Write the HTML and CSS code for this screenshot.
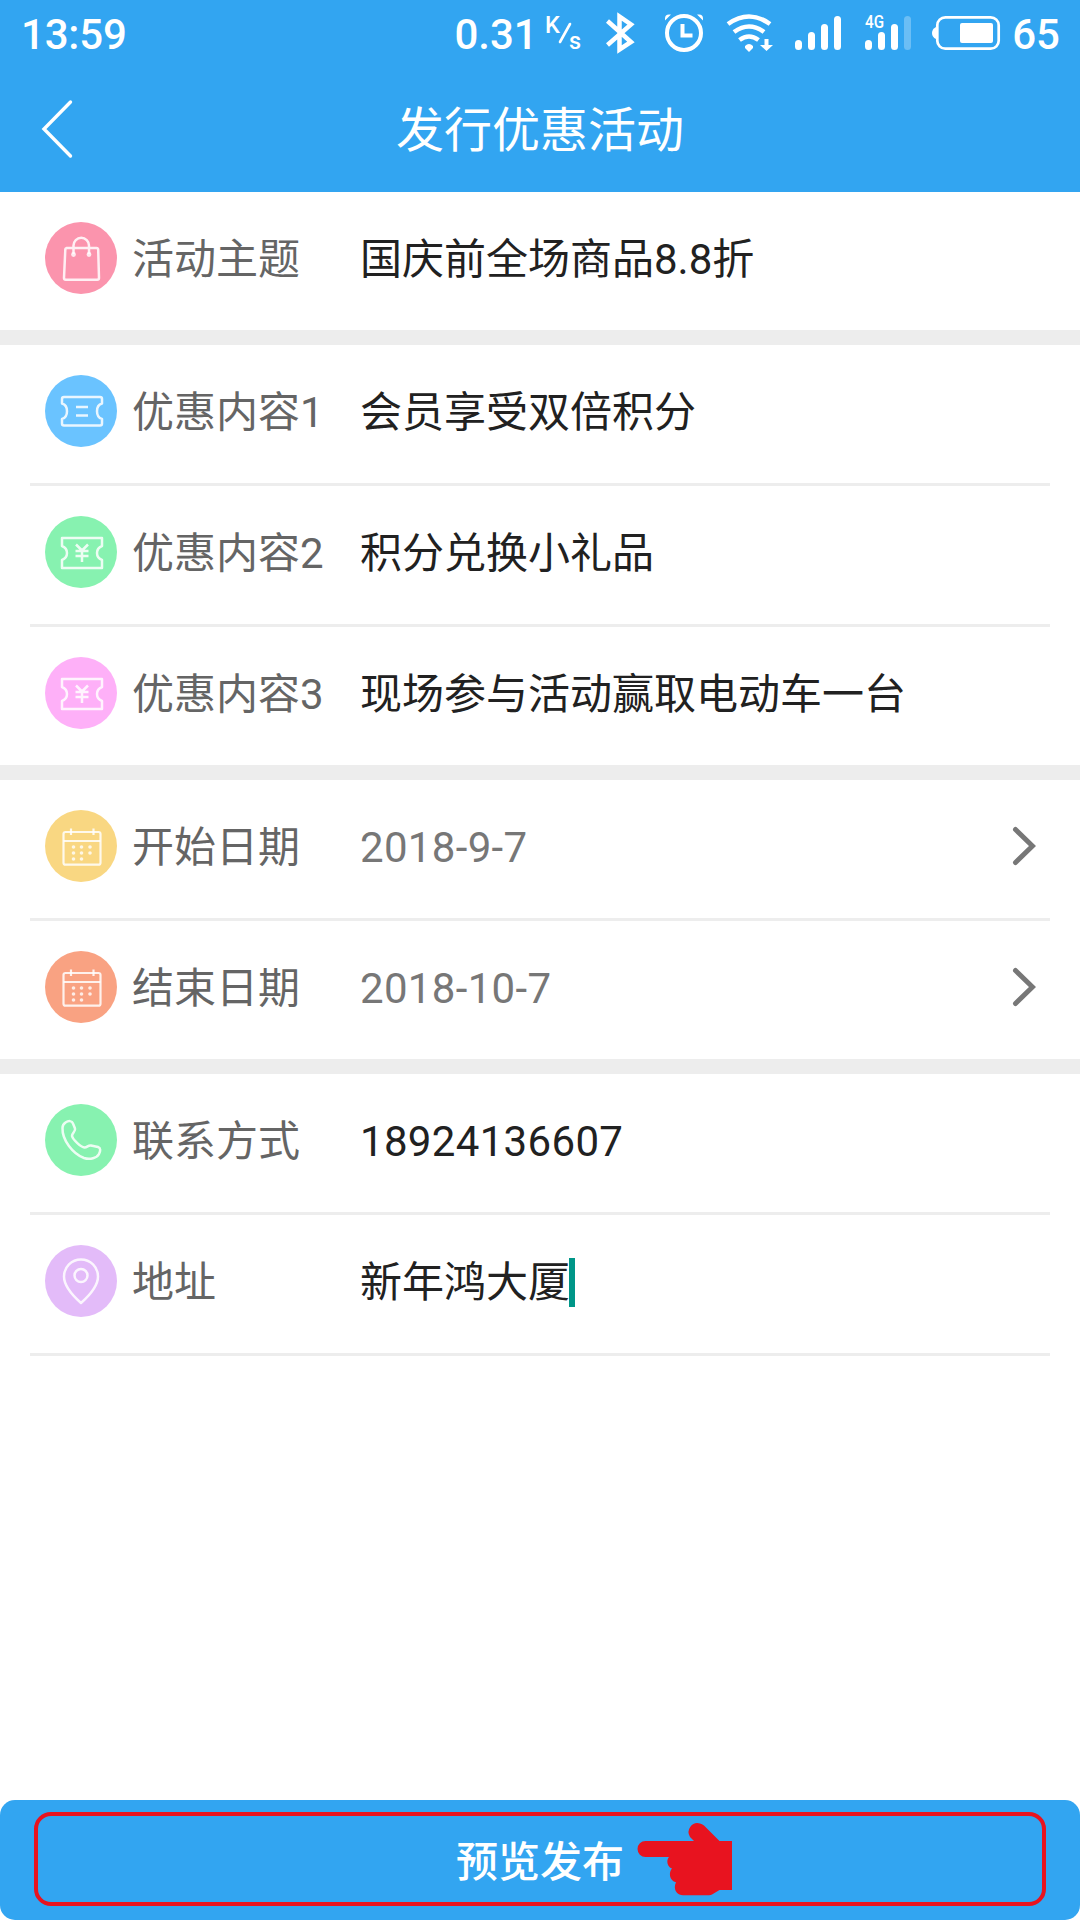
FILE: index.html
```html
<!DOCTYPE html>
<html lang="zh-CN">
<head>
<meta charset="utf-8">
<title>发行优惠活动</title>
<link rel="stylesheet" href="styles.css">
</head>
<body>
<div class="screen">
  <header class="header">
    <div class="status">
      <span class="time">13:59</span>
      <span class="rate">0.31</span>
      <svg class="status-icons" width="464" height="66" viewBox="540 0 464 66" fill="none" stroke="#fff">
        <text class="unit" x="545" y="32.500">K</text>
        <text class="unit" x="569" y="48.500">s</text>
        <path d="M570 24 560 42" stroke-width="2.6" stroke-linecap="round"/>
        <path d="M607.500 21 631 42 619.500 49.500V16.500L631 24.500 607.500 45" stroke-width="4.500"/>
        <circle cx="684" cy="33" r="17" stroke-width="4"/>
        <path d="M682.500 24v11.500h10" stroke-width="4"/>
        <path d="M665 20.500v-2q0-4 4-4h2zM703 20.500v-2q0-4-4-4h-2z" fill="#fff" stroke="none"/>
        <g stroke-width="4.600">
          <path d="M728 24q21-15 42 0M734 32q15-11 30 0M739.500 40q9.500-7 19 0"/>
        </g>
        <path d="M745 46q4-4 8 0v2l-4 4-4-4zM764.500 39h4v6h4.500l-6.500 6-6.500-6h4.500z" fill="#fff" stroke="none"/>
        <g stroke-width="7" stroke-linecap="round">
          <path d="M798.500 43.500v3M811.500 35.500v11M824.500 27.500v19M837.500 19.500v27M868.500 43.500v3M881.500 35.500v11M894.500 27.500v19"/>
          <path d="M907.500 19.500v27" opacity=".28"/>
        </g>
        <text class="network" x="865" y="28" textLength="19" lengthAdjust="spacingAndGlyphs">4G</text>
        <rect x="937.300" y="17.300" width="61.400" height="31.400" rx="8" stroke-width="2.700"/>
        <rect x="960" y="23" width="33" height="20" rx="2" fill="#fff" stroke="none"/>
        <path d="M936 27q-4 2-4 6t4 6z" fill="#fff" stroke="none"/>
      </svg>
      <span class="battery">65</span>
    </div>
    <div class="titlebar">
      <svg class="back" width="33" height="60" viewBox="0 0 33 60" fill="none" stroke="#fff" stroke-width="3.400" stroke-linecap="round"><path d="M29.500 3 3 30l26.500 27"/></svg>
      <h1 class="title">发行优惠活动</h1>
    </div>
  </header>

  <main class="form">
    <section class="group">
      <div class="row">
        <svg class="icon pink" viewBox="0 0 72 72"><path d="M21.500 26h30q1.500 0 1.700 1.700L54 56q0 1.700-1.700 1.700H20.700q-1.700 0-1.700-1.700l1.300-28.300q.2-1.700 1.700-1.700zM28.500 32v-8.500a7.700 7.700 0 0 1 15.500 0V32"/><g class="dots"><circle cx="28.500" cy="32.500" r="2.400"/><circle cx="44" cy="32.500" r="2.400"/></g></svg>
        <span class="label">活动主题</span><span class="value">国庆前全场商品8.8折</span>
      </div>
    </section>
    <section class="group">
      <div class="row">
        <svg class="icon blue" viewBox="0 0 72 72"><path d="M19 22h36q2 0 2 2v4.500q-5 1.500-5 7.700t5 7.700v4.500q0 2-2 2H19q-2 0-2-2v-4.500q5-1.500 5-7.700t-5-7.700V24q0-2 2-2zM31 32h12M31 40.500h12"/></svg>
        <span class="label">优惠内容1</span><span class="value">会员享受双倍积分</span>
      </div>
      <div class="row">
        <svg class="icon green" viewBox="0 0 72 72"><path d="M17 22h40v8q-5 2-5 7t5 7v8H17v-8q5-2 5-7t-5-7zM31 28.500l6 6 6-6M30.500 35h13M30.500 40h13M37 34.500V46"/></svg>
        <span class="label">优惠内容2</span><span class="value">积分兑换小礼品</span>
      </div>
      <div class="row">
        <svg class="icon magenta" viewBox="0 0 72 72"><path d="M17 22h40v8q-5 2-5 7t5 7v8H17v-8q5-2 5-7t-5-7zM31 28.500l6 6 6-6M30.500 35h13M30.500 40h13M37 34.500V46"/></svg>
        <span class="label">优惠内容3</span><span class="value">现场参与活动赢取电动车一台</span>
      </div>
    </section>
    <section class="group">
      <div class="row">
        <svg class="icon yellow thin" viewBox="0 0 72 72"><rect x="18.500" y="22" width="37" height="32.700" rx="2"/><path d="M18.500 31h37M26 18.500V25M48.500 18.500V25"/><g class="dots"><circle cx="28.500" cy="37" r="1.800"/><circle cx="36.500" cy="37" r="1.800"/><circle cx="45" cy="37" r="1.800"/><circle cx="28.500" cy="43" r="1.800"/><circle cx="36.500" cy="43" r="1.800"/><circle cx="45" cy="43" r="1.800"/><circle cx="28.500" cy="49" r="1.800"/><circle cx="36.500" cy="49" r="1.800"/></g></svg>
        <span class="label">开始日期</span><span class="value date">2018-9-7</span>
        <svg class="chevron" viewBox="0 0 24 42"><path d="M3.500 4.500 20.500 21l-17 16.500"/></svg>
      </div>
      <div class="row">
        <svg class="icon orange thin" viewBox="0 0 72 72"><rect x="18.500" y="22" width="37" height="32.700" rx="2"/><path d="M18.500 31h37M26 18.500V25M48.500 18.500V25"/><g class="dots"><circle cx="28.500" cy="37" r="1.800"/><circle cx="36.500" cy="37" r="1.800"/><circle cx="45" cy="37" r="1.800"/><circle cx="28.500" cy="43" r="1.800"/><circle cx="36.500" cy="43" r="1.800"/><circle cx="45" cy="43" r="1.800"/><circle cx="28.500" cy="49" r="1.800"/><circle cx="36.500" cy="49" r="1.800"/></g></svg>
        <span class="label">结束日期</span><span class="value date">2018-10-7</span>
        <svg class="chevron" viewBox="0 0 24 42"><path d="M3.500 4.500 20.500 21l-17 16.500"/></svg>
      </div>
    </section>
    <section class="group last">
      <div class="row">
        <svg class="icon green" viewBox="0 0 72 72"><path d="M20.500 18.500c3-2 6.500-2 7.500 1l2 5c1 3-3 4-3 7.500 1 4 9 11 12.500 11.500 3 0 3.500-2.500 6.500-2l7 1.500c3 1 2.500 4 1 7-2 4-9 6-15 4C28 50 17 36 17.500 24q0-3.500 3-5.500z"/></svg>
        <span class="label">联系方式</span><span class="value number">18924136607</span>
      </div>
      <div class="row">
        <svg class="icon purple" viewBox="0 0 72 72"><path d="M36 58C27 50 19 40 19 31.500a17 17 0 0 1 34 0C53 40 45 50 36 58z"/><circle cx="36" cy="30.500" r="6.500"/></svg>
        <span class="label">地址</span><span class="value">新年鸿大厦</span><i class="caret"></i>
      </div>
    </section>
  </main>

  <footer class="footer">
    <div class="submit">
      <div class="highlight"><span class="submit-text">预览发布</span>
        <svg class="hand" width="95" height="73" viewBox="0 0 95 73" fill="#e8131f"><path d="M8.500 18H57l-4-4A9 9 0 0 1 63 .5q2 .5 4 2L82.500 18H95v49H82.500L75 71.500q-1 .7-3 .7H46c-7 0-10-7-7-13-6-1-8-9-4-13.700-5-2-6-8-3-11.500H8.500a8 8 0 0 1 0-16z"/></svg>
      </div>
    </div>
  </footer>
</div>
</body>
</html>
```
FILE: styles.css
```css
* { box-sizing: border-box; }
body {
  margin: 0;
  font-family: Roboto, "Noto Sans CJK SC", sans-serif;
  background: #fff;
}
.screen {
  width: 1080px;
  height: 1920px;
  display: flex;
  flex-direction: column;
  overflow: hidden;
}
.header { height: 192px; background: #32a5f1; color: #fff; }
.status {
  height: 66px;
  display: flex;
  align-items: center;
  padding: 4px 20px 0 21px;
  font-size: 42px;
  font-weight: 500;
  line-height: 66px;
}
.time { width: 434px; letter-spacing: -.2px; }
.rate { width: 86px; }
.status-icons { margin-top: -4px; flex: none; }
.battery { margin-left: 8px; }
.unit { font: 500 23.5px Roboto, sans-serif; fill: #fff; stroke: none; }
.network { font: 500 17.5px Roboto, sans-serif; fill: #fff; stroke: none; }
.titlebar {
  height: 126px;
  display: grid;
  grid-template-columns: 120px 1fr 120px;
  align-items: center;
}
.back { margin-left: 41px; }
.title {
  margin: 0;
  padding-top: 4px;
  font-size: 48px;
  font-weight: 400;
  line-height: 122px;
  text-align: center;
}
.form { flex: 1; }
.group { padding: 0 30px; border-bottom: 15px solid #ededed; }
.group.last { border-bottom: 0; }
.row {
  height: 138px;
  padding: 0 15px 6px;
  display: flex;
  align-items: center;
  font-size: 42px;
  line-height: 60px;
}
.row + .row, .last .row:last-child { border-top: 3px solid #ededed; height: 141px; }
.last .row:last-child { border-bottom: 3px solid #ededed; height: 144px; }
.icon {
  width: 72px;
  height: 72px;
  flex: none;
  margin-right: 15px;
  border-radius: 50%;
  fill: none;
  stroke: rgba(255, 255, 255, .85);
  stroke-width: 2.5;
  stroke-linejoin: round;
}
.thin { stroke-width: 2.2; }
.dots { fill: rgba(255, 255, 255, .8); stroke: none; }
.pink { background: #fb94ad; }
.blue { background: #6ac3ff; }
.green { background: #87f2b0; }
.magenta { background: #feb0f8; }
.yellow { background: #f9d782; }
.orange { background: #f9a282; }
.purple { background: #e3bbf9; }
.label, .value { padding-top: 4px; }
.label { width: 228px; color: #656565; }
.value { color: #212121; }
.date, .number { letter-spacing: .33px; }
.date { color: #777; }
.chevron {
  width: 24px;
  height: 42px;
  margin-left: auto;
  margin-right: -1px;
  fill: none;
  stroke: #777;
  stroke-width: 5;
  stroke-linecap: round;
}
.caret { width: 6px; height: 49px; margin: 3px 0 0 -1px; background: #009688; }
.footer { height: 120px; background: #fff; }
.submit {
  height: 120px;
  padding: 12px 34px 14px;
  border-radius: 15px;
  background: #32a5f1;
}
.highlight {
  height: 94px;
  display: flex;
  align-items: center;
  padding-left: 418px;
  border: 4px solid #e8131f;
  border-radius: 17px;
}
.submit-text { padding-top: 7px; color: #fff; font-size: 42px; font-weight: 500; line-height: 60px; }
.hand { margin-left: 13px; }
```
